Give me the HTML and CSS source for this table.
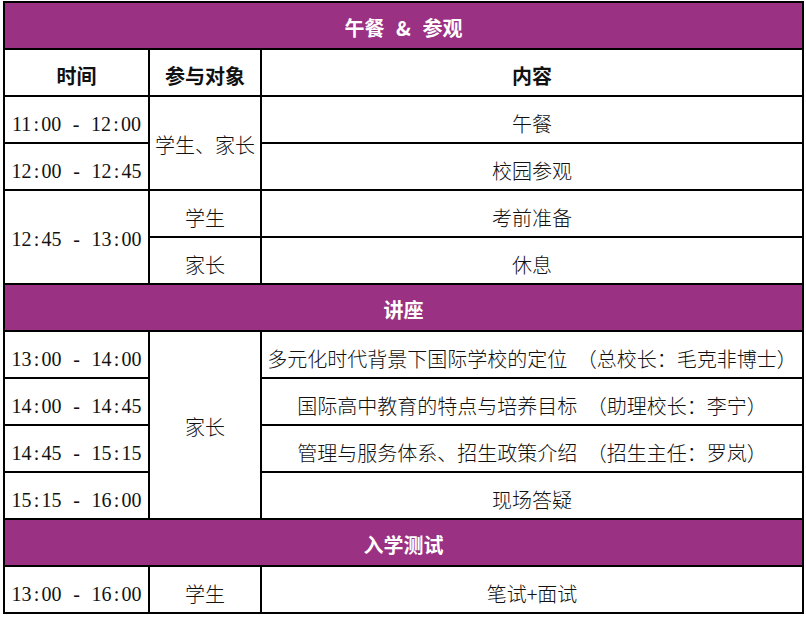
FILE: index.html
```html
<!DOCTYPE html>
<html lang="zh-CN">
<head>
<meta charset="utf-8">
<title>日程安排</title>
<link rel="stylesheet" href="styles.css">
</head>
<body>
<table class="schedule">
  <colgroup>
    <col class="col-time">
    <col class="col-who">
    <col class="col-what">
  </colgroup>
  <tr><td colspan="3" class="section">午餐 &amp; 参观</td></tr>
  <tr><th>时间</th><th>参与对象</th><th>内容</th></tr>
  <tr>
    <td class="time">11<span class="colon">:</span>00 - 12<span class="colon">:</span>00</td>
    <td rowspan="2" class="span">学生、家长</td>
    <td>午餐</td>
  </tr>
  <tr>
    <td class="time">12<span class="colon">:</span>00 - 12<span class="colon">:</span>45</td>
    <td>校园参观</td>
  </tr>
  <tr>
    <td rowspan="2" class="time span">12<span class="colon">:</span>45 - 13<span class="colon">:</span>00</td>
    <td>学生</td>
    <td>考前准备</td>
  </tr>
  <tr>
    <td>家长</td>
    <td>休息</td>
  </tr>
  <tr><td colspan="3" class="section">讲座</td></tr>
  <tr>
    <td class="time">13<span class="colon">:</span>00 - 14<span class="colon">:</span>00</td>
    <td rowspan="4" class="span">家长</td>
    <td>多元化时代背景下国际学校的定位 （总校长：毛克非博士）</td>
  </tr>
  <tr>
    <td class="time">14<span class="colon">:</span>00 - 14<span class="colon">:</span>45</td>
    <td>国际高中教育的特点与培养目标 （助理校长：李宁）</td>
  </tr>
  <tr>
    <td class="time">14<span class="colon">:</span>45 - 15<span class="colon">:</span>15</td>
    <td>管理与服务体系、招生政策介绍 （招生主任：罗岚）</td>
  </tr>
  <tr>
    <td class="time">15<span class="colon">:</span>15 - 16<span class="colon">:</span>00</td>
    <td>现场答疑</td>
  </tr>
  <tr><td colspan="3" class="section">入学测试</td></tr>
  <tr>
    <td class="time">13<span class="colon">:</span>00 - 16<span class="colon">:</span>00</td>
    <td>学生</td>
    <td>笔试+面试</td>
  </tr>
</table>
</body>
</html>
```
FILE: styles.css
```css
* {
  box-sizing: border-box;
}

html,
body {
  margin: 0;
  background: #ffffff;
}

body {
  padding: 1px 0 0 3px;
}

.schedule {
  border-collapse: separate;
  border-spacing: 0;
  table-layout: fixed;
  width: 801px;
  border-top: 2px solid #000;
  border-left: 2px solid #000;
  font-family: "Noto Sans CJK SC", sans-serif;
  font-size: 20px;
  font-weight: 300;
  color: #111;
}

.col-time {
  width: 145px;
}

.col-who {
  width: 112px;
}

.col-what {
  width: 542px;
}

.schedule td,
.schedule th {
  height: 47px;
  padding: 8px 0 0;
  border-right: 2px solid #000;
  border-bottom: 2px solid #000;
  text-align: center;
  vertical-align: middle;
  line-height: 1;
  white-space: nowrap;
  word-spacing: 5px;
}

.schedule th {
  font-weight: 700;
  padding-top: 7px;
}

.schedule .section {
  background: #9a3182;
  color: #ffffff;
  font-weight: 700;
  padding-top: 4px;
  word-spacing: 7px;
}

.schedule .span {
  padding-top: 4px;
}

.schedule .time {
  font-family: "Liberation Serif", serif;
  font-size: 20px;
  font-weight: 400;
  word-spacing: 6.65px;
}

.colon {
  margin: 0 2.2px;
}
```
